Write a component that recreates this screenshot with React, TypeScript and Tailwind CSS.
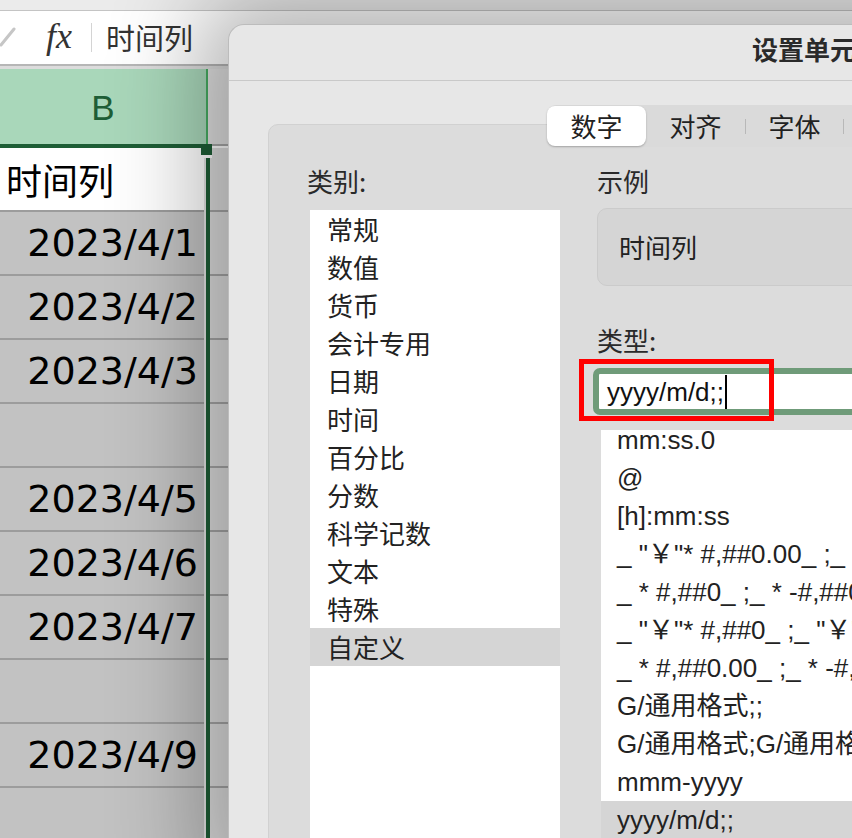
import React from 'react'

const categories = ['常规', '数值', '货币', '会计专用', '日期', '时间', '百分比', '分数', '科学记数', '文本', '特殊', '自定义']

const types = [
  'mm:ss.0',
  '@',
  '[h]:mm:ss',
  '_ "￥"* #,##0.00_ ;_ "￥"* -#,##0.00_ ;_ "￥"* "-"??_ ;_ @_ ',
  '_ * #,##0_ ;_ * -#,##0_ ;_ * "-"_ ;_ @_ ',
  '_ "￥"* #,##0_ ;_ "￥"* -#,##0_ ;_ "￥"* "-"_ ;_ @_ ',
  '_ * #,##0.00_ ;_ * -#,##0.00_ ;_ * "-"??_ ;_ @_ ',
  'G/通用格式;;',
  'G/通用格式;G/通用格式;G/通用格式',
  'mmm-yyyy',
  'yyyy/m/d;;',
]

// 列 B 的单元格内容
const rows = ['时间列', '2023/4/1', '2023/4/2', '2023/4/3', '', '2023/4/5', '2023/4/6', '2023/4/7', '', '2023/4/9', '']

export default function App() {
  return (
    <div className="relative w-[852px] h-[838px] overflow-hidden bg-white font-['Noto_Sans_CJK_SC',sans-serif] text-[#222]">
      {/* 表格底层 */}
      <div className="flex flex-col">
        <div className="h-[11px] bg-[#ebebeb] border-b border-[#c4c4c4]" />
        <div className="h-[53px] flex items-center bg-white">
          <svg width="16" height="20" viewBox="0 0 16 20" className="-mt-[2px]">
            <line x1="14" y1="2" x2="1" y2="18" stroke="#c6c6c6" strokeWidth="3" strokeLinecap="round" />
          </svg>
          <span className="ml-[30px] font-['Liberation_Serif',serif] italic text-[36px] leading-none text-[#333] -mt-[4px]">fx</span>
          <div className="ml-[19px] w-px h-[29px] bg-[#d4d4d4]" />
          <span className="ml-[14px] text-[29px] leading-none text-[#333]">时间列</span>
        </div>
        <div className="h-[5px] border-t-2 border-[#b6b6b6] bg-[#dcdcdc]" />
        {/* 列标题 */}
        <div className="flex h-[79px]">
          <div className="w-[206px] flex items-center justify-center pt-[4px] bg-[#a9d7ba] border-b-4 border-[#1e5e36] font-['Liberation_Sans',sans-serif] text-[35px] text-[#1e5e36]">
            B
          </div>
          <div className="w-[2px] bg-[#47ad62] border-b-4 border-[#1e5e36]" />
          <div className="flex-1 bg-[#e2e2e2] border-b-2 border-[#a8a8a8] mb-[2px]" />
        </div>
        {/* 行 */}
        <div className="flex">
          <div className="w-[204px] flex flex-col">
            {rows.map((r, i) => (
              <div
                key={i}
                className={
                  i === 0
                    ? 'h-[64px] border-b-2 border-[#9c9c9c] bg-white flex items-center pl-[6px] text-[36px] text-black'
                    : "h-[64px] border-b-2 border-[#9c9c9c] bg-[#c2c2c2] flex items-center justify-end pr-[6px] font-['DejaVu_Sans',sans-serif] text-[38px] text-black"
                }
              >
                {r}
              </div>
            ))}
          </div>
          <div className="w-[2px] bg-[#e4e4e4]" />
          <div className="w-[4px] bg-[#1e5e36]" />
          <div className="flex-1 flex flex-col">
            {rows.map((_, i) => (
              <div key={i} className="h-[64px] border-b-2 border-[#a6a6a6] bg-[#dedede]" />
            ))}
          </div>
        </div>
      </div>

      {/* 选区右下角的填充柄 */}
      <div className="absolute left-[201px] top-[144px] w-[11px] h-[11px] bg-[#1e5e36] border-b-[3px] border-white box-content" />

      {/* 设置单元格格式 对话框 */}
      <div className="absolute left-[228px] top-[24px] w-[720px] h-[840px] rounded-tl-[16px] bg-[#e7e7e7] border-l border-t border-[#bcbcbc] shadow-[0_0_90px_30px_rgba(0,0,0,0.3)]">
        <div className="h-[56px] border-b border-[#c9c9c9] pl-[523px] pt-[9px] whitespace-nowrap text-[26px] leading-[30px] font-bold text-[#2a2a2a]">
          设置单元格格式
        </div>
        <div className="pl-[39px] pt-[43px]">
          <div className="h-[760px] rounded-[10px] bg-[#dcdcdc] border border-[#d1d1d1]">
            {/* 分段控件 */}
            <div className="-mt-[20px] pl-[278px]">
              <div className="flex items-center h-[42px] w-[420px] rounded-[9px] bg-[#dadada] text-[26px] leading-none">
                <div className="w-[99px] h-[40px] flex items-center justify-center rounded-[8px] bg-white shadow-[0_1px_2px_rgba(0,0,0,0.25)]">数字</div>
                <div className="w-[99px] flex items-center justify-center">对齐</div>
                <div className="w-px h-[15px] bg-[#b8b8b8]" />
                <div className="w-[97px] flex items-center justify-center">字体</div>
                <div className="w-px h-[15px] bg-[#b8b8b8]" />
                <div className="w-[97px] flex items-center justify-center">边框</div>
              </div>
            </div>

            <div className="flex pl-[38px] mt-[19px]">
              <div className="w-[253px] flex flex-col">
                <div className="h-[30px] leading-[30px] text-[26px] text-[#2a2a2a]">类别:</div>
                <div className="mt-[14px] ml-[3px] w-[250px] h-[640px] bg-white">
                  {categories.map((c, i) => (
                    <div
                      key={c}
                      className={`h-[38px] flex items-center pl-[17px] text-[26px] leading-none ${i === 11 ? 'bg-[#d5d5d5]' : ''}`}
                    >
                      {c}
                    </div>
                  ))}
                </div>
              </div>

              <div className="ml-[37px] flex-1 flex flex-col">
                <div className="h-[30px] leading-[30px] text-[26px] text-[#2a2a2a]">示例</div>
                <div className="mt-[12px] h-[78px] rounded-[10px] bg-[#d5d5d5] border border-[#cbcbcb] flex items-center pl-[21px] text-[26px] leading-none">
                  时间列
                </div>
                <div className="mt-[39px] h-[30px] leading-[30px] text-[26px] text-[#2a2a2a]">类型:</div>
                <div className="mt-[13px] -ml-[4px] h-[47px] border-[6px] border-[#6f9b79] rounded-[7px] bg-white flex items-center pl-[8px] font-['Liberation_Sans','Noto_Sans_CJK_SC',sans-serif] text-[26px] leading-none text-[#111]">
                  <span>yyyy/m/d;;</span>
                  <span className="ml-px w-[2px] h-[34px] bg-black" />
                </div>
                <div className="mt-[15px] ml-[4px] h-[420px] bg-white overflow-hidden">
                  <div className="-mt-[9px] font-['Liberation_Sans','Noto_Sans_CJK_SC',sans-serif] text-[26px] leading-none text-[#222]">
                    {types.map((t, i) => (
                      <div
                        key={i}
                        className={`h-[38px] flex items-center pl-[16px] whitespace-pre ${i === types.length - 1 ? 'bg-[#d5d5d5]' : ''}`}
                      >
                        {t}
                      </div>
                    ))}
                  </div>
                </div>
              </div>
            </div>
          </div>
        </div>
      </div>

      {/* 红色标注框 */}
      <div className="absolute left-[579px] top-[359px] w-[195px] h-[62px] border-[5px] border-[#ff0000]" />
    </div>
  )
}
